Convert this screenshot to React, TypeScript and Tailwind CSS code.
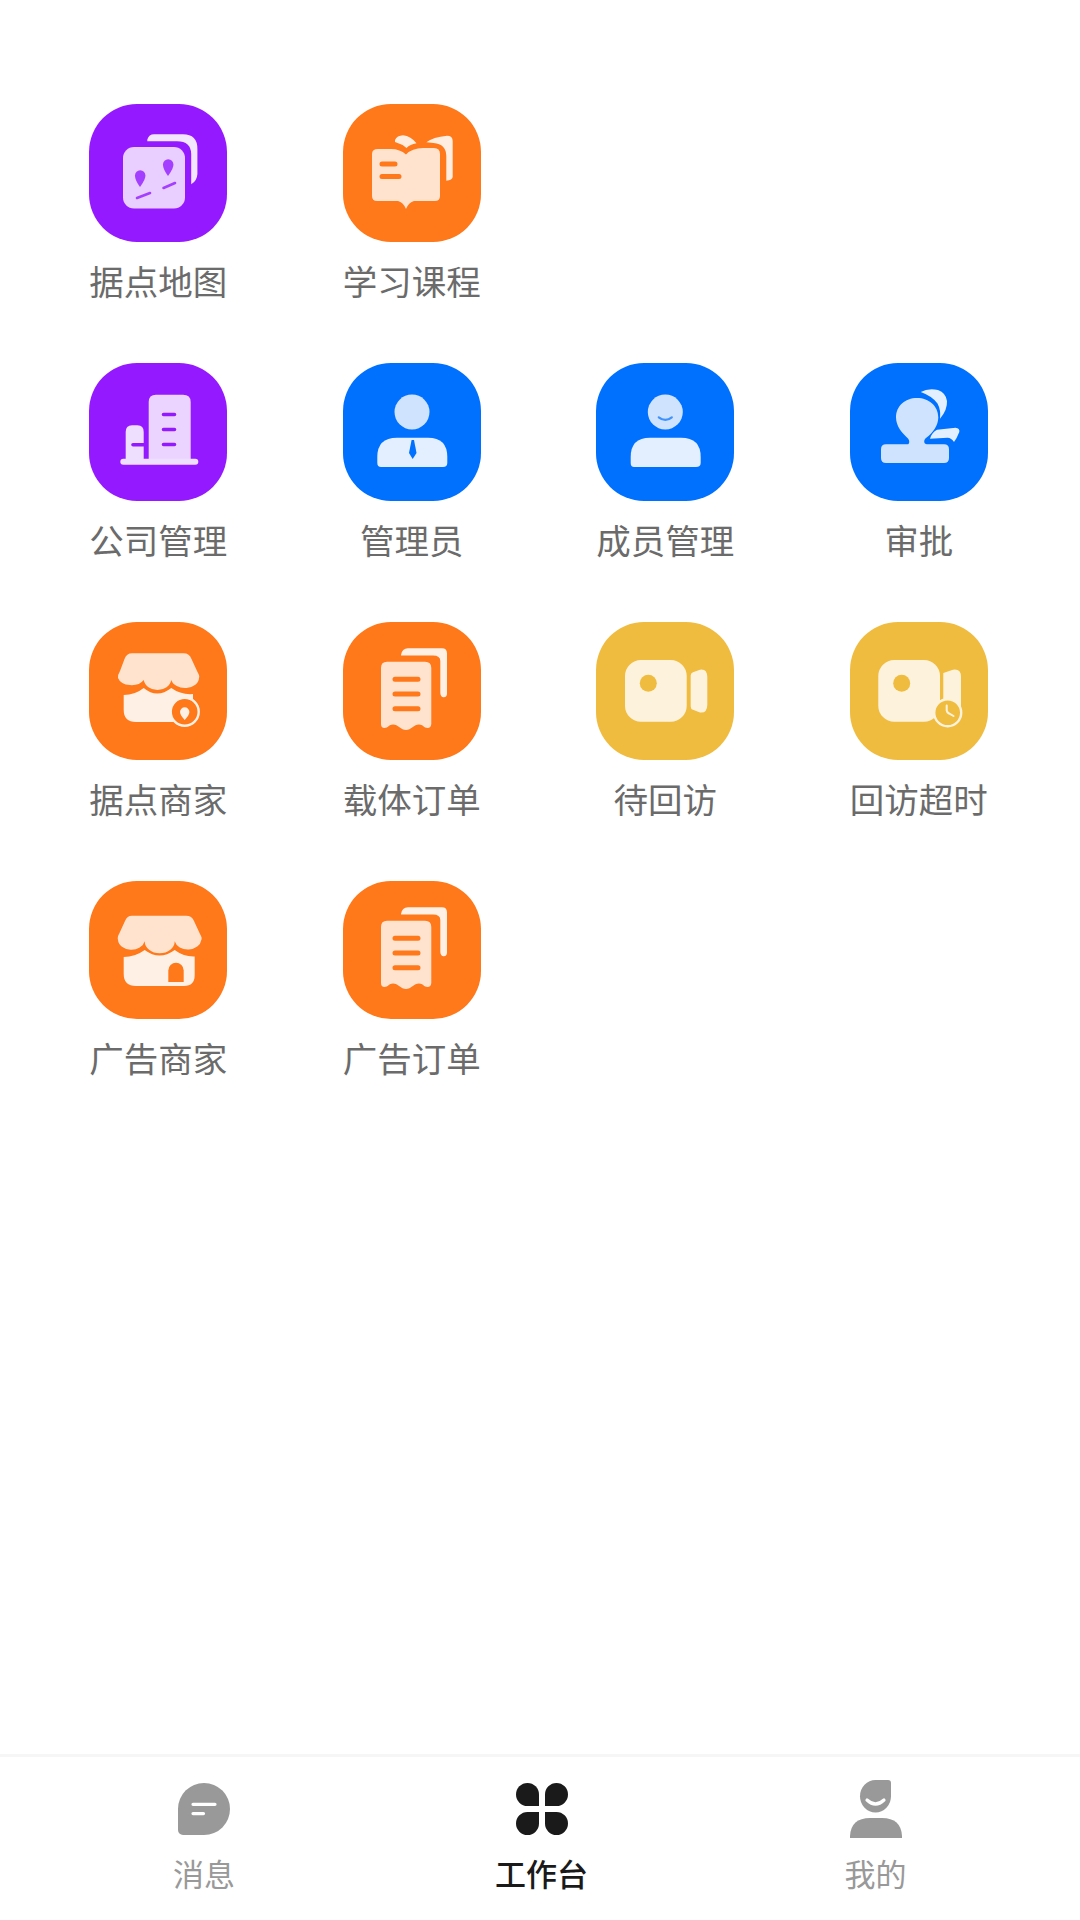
import type { ReactNode } from "react";

const PURPLE = "#9519ff";
const ORANGE = "#ff7819";
const BLUE = "#0070ff";
const YELLOW = "#f0bc40";

const Svg = ({ children }: { children: ReactNode }) => (
  <svg width="138" height="138" viewBox="0 0 138 138" className="block">
    {children}
  </svg>
);

const MapIcon = () => (
  <Svg>
    <path d="M58.3 35.5Q60 30.3 65 30.3H94Q108.4 30.3 108.4 45V70Q108 77 102.2 80.3V50Q102 37.2 88 37.2H58.3Z" fill="#f2e6ff" />
    <rect x="34" y="43" width="62" height="61.5" rx="11" fill="#e8cfff" />
    <path d="M79 72C75 66.5 74 63 74 60.5A5.2 5.2 0 0 1 84.4 60.5C84.4 63 83 66.5 79 72Z" fill="#a53fff" />
    <path d="M51 83C47 77.5 46 74 46 71.5A5.2 5.2 0 0 1 56.4 71.5C56.4 74 55 77.5 51 83Z" fill="#a53fff" />
    <path d="M48 94L61 89M74.5 84L86 79" stroke="#a53fff" strokeWidth="2.6" strokeLinecap="round" />
  </Svg>
);

const BookIcon = () => (
  <Svg>
    <path d="M52 36Q54 31.5 60 31.2Q68 32 73.5 39.3Q67 40.5 63.5 44Q59 40 52 38Z M83.3 38.3Q90 33 104 31.7Q109.7 31.7 109.7 37V73Q109.5 76 103.3 76.7V52Q103 40 90.7 39Z" fill="#ffeee0" />
    <path d="M35 45H48Q57 45 63 50.5Q69 44 80 44H91Q97 44 97 50V92Q97 97 92 97H71Q66 98 63 105Q60 98 55 97H34Q29 97 29 92V50Q29 45 35 45Z" fill="#ffe3cf" />
    <path d="M39 60H52M39 72.5H56" stroke={ORANGE} strokeWidth="5" strokeLinecap="round" />
  </Svg>
);

const BuildingIcon = () => (
  <Svg>
    <path d="M59.7 96V39Q59.7 31.7 67 31.7H94Q101.7 31.7 101.7 39V96Z" fill="#ebd4ff" />
    <path d="M36.7 96V69Q36.7 62.3 43 62.3H48.5Q54.7 62.3 54.7 69V96Z" fill="#efdfff" />
    <rect x="31.3" y="95.7" width="78" height="6" rx="3" fill="#efdfff" />
    <path d="M74.5 51.5H85.5M74.5 66.5H85.5M74.5 81.5H85.5" stroke={PURPLE} strokeWidth="3.6" strokeLinecap="round" />
    <path d="M44 81.7H54.7" stroke={PURPLE} strokeWidth="3.6" strokeLinecap="round" />
  </Svg>
);

const AdminIcon = () => (
  <Svg>
    <circle cx="69" cy="49" r="17.5" fill="#cfe3ff" />
    <path d="M34.3 100V94Q34.3 74.7 54 74.7H85Q104.3 74.7 104.3 94V100Q104.3 104 100 104H38Q34.3 104 34.3 100Z" fill="#e3efff" />
    <path d="M68.6 77H71L73.5 90L69.7 96L66 90Z" fill={BLUE} />
  </Svg>
);

const MemberIcon = () => (
  <Svg>
    <circle cx="69.3" cy="49" r="17.5" fill="#cfe3ff" />
    <path d="M62.8 54.3Q69.3 59.5 75.8 54.3" stroke={BLUE} strokeOpacity="0.7" strokeWidth="2.2" fill="none" strokeLinecap="round" />
    <path d="M34.7 100V94Q34.7 74.7 54 74.7H85Q104.7 74.7 104.7 94V100Q104.7 104 100 104H38Q34.7 104 34.7 100Z" fill="#e3efff" />
  </Svg>
);

const ApprovalIcon = () => (
  <Svg>
    <path d="M36 81.3H57.5C59.5 81.3 60 78 58 75.5C52 70 46 63 46 54.5C46 43 55 35 67 35C79 35 88.3 43 88.3 54.5C88.3 62 83 70 76 75C73.5 77 73.5 81.3 77 81.3H94Q99 81.3 99 86.3V95Q99 100 94 100H36Q31 100 31 95V86.3Q31 81.3 36 81.3Z" fill="#cfe3ff" />
    <path d="M70.7 29Q78 25 88 27Q96 30 97 38Q97.5 47 90 55.7Q91 47 87.5 40.5Q82 33 70.7 29Z" fill="#e3efff" />
    <path d="M80 75.7Q82 69 87 66.7L105.5 64.7Q110 65 109.3 69Q107 75 104 79Q101.5 75 97.5 74.8Z" fill="#e3efff" />
  </Svg>
);

const StorePinIcon = () => (
  <Svg>
    <path d="M43 31.3H94.5Q100.5 31.3 102.5 37L108.5 50Q111 54 110 56A14 10 0 0 1 82.3 58A14 12 0 0 1 54.7 58A14 10 0 0 1 29 56Q28.5 53 31 49L35.5 37Q37.5 31.3 43 31.3Z" fill="#ffe3cf" />
    <path d="M34.7 73Q46 73 54.7 66Q68 77 82.3 66Q92 73 104 72V92Q104 100 96 100H47Q34.7 100 34.7 88Z" fill="#fff0e6" />
    <circle cx="95.7" cy="89.7" r="14" fill={ORANGE} stroke="#fff0e6" strokeWidth="2.4" />
    <path d="M95.7 98C92.5 94.5 91 92 91 90A4.7 4.7 0 0 1 100.4 90C100.4 92 99 94.5 95.7 98Z" fill="#fff0e6" />
  </Svg>
);

const StoreDoorIcon = () => (
  <Svg>
    <path d="M43 34.7H97Q103 34.7 105 40L111 53Q113.5 57 112.3 59A13.5 10.5 0 0 1 85.7 60.3A15 12 0 0 1 55.7 60.3A13.5 10.5 0 0 1 29 59Q28 56 30.5 52L36 40Q38 34.7 43 34.7Z" fill="#ffe3cf" />
    <path d="M34.7 76Q46 76 55.7 69Q70.5 80 85.7 69Q95 76 105.7 75.5V94Q105.7 105 95 105H47Q34.7 105 34.7 93Z" fill="#fff0e6" />
    <path d="M79.3 101V89.5A7.7 7.7 0 0 1 94.7 89.5V101Z" fill={ORANGE} />
  </Svg>
);

const DocIcon = () => (
  <Svg>
    <path d="M58 33Q59 26.3 65 26.3H99Q104 26.3 104 31.5V72Q103.5 75.5 100.6 75.3Q97.5 75 97.3 71V39Q97.3 33.5 90 33.5H58Z" fill="#fff0e6" />
    <path d="M44 39.7H82Q88.3 39.7 88.3 46V102Q88 106 84.5 106C81 106 80 102.5 76 102.5C71 102.5 68 108 63 108C58 108 55 102.5 50 102.5C46 102.5 45 106 41.5 106Q38 106 38 102V46Q38 39.7 44 39.7Z" fill="#ffe3cf" />
    <path d="M52 57.3H75M52 72H75M52 86.7H75" stroke={ORANGE} strokeWidth="5" strokeLinecap="round" />
  </Svg>
);

const VideoIcon = () => (
  <Svg>
    <rect x="29" y="38" width="61.7" height="61.7" rx="16" fill="#fdf3dc" />
    <circle cx="52.3" cy="61.3" r="8.5" fill={YELLOW} />
    <path d="M94.7 53.5Q94.7 51 97 50.3L104 47.7Q111 46.5 111.3 55V83Q111 91.5 104 90.5L97 87.8Q94.7 87 94.7 84.5Z" fill="#fdf3dc" />
  </Svg>
);

const VideoClockIcon = () => (
  <Svg>
    <rect x="28.3" y="38" width="61.7" height="61.7" rx="16" fill="#fdf3dc" />
    <circle cx="51.7" cy="61.3" r="8.5" fill={YELLOW} />
    <path d="M93.3 51L103 47.7Q111 46.5 111 55V88H93.3Z" fill="#fdf3dc" />
    <circle cx="97.7" cy="90.7" r="13.5" fill={YELLOW} stroke="#fdf3dc" strokeWidth="2.4" />
    <path d="M96.7 83.5V88.5Q97 90.5 99 91.5L103.5 94" stroke="#fdf3dc" strokeWidth="2" fill="none" strokeLinecap="round" />
  </Svg>
);

type Item = { label: string; bg: string; icon: ReactNode };

const items: (Item | null)[] = [
  { label: "据点地图", bg: "bg-[#9519ff]", icon: <MapIcon /> },
  { label: "学习课程", bg: "bg-[#ff7819]", icon: <BookIcon /> },
  null,
  null,
  { label: "公司管理", bg: "bg-[#9519ff]", icon: <BuildingIcon /> },
  { label: "管理员", bg: "bg-[#0070ff]", icon: <AdminIcon /> },
  { label: "成员管理", bg: "bg-[#0070ff]", icon: <MemberIcon /> },
  { label: "审批", bg: "bg-[#0070ff]", icon: <ApprovalIcon /> },
  { label: "据点商家", bg: "bg-[#ff7819]", icon: <StorePinIcon /> },
  { label: "载体订单", bg: "bg-[#ff7819]", icon: <DocIcon /> },
  { label: "待回访", bg: "bg-[#f0bc40]", icon: <VideoIcon /> },
  { label: "回访超时", bg: "bg-[#f0bc40]", icon: <VideoClockIcon /> },
  { label: "广告商家", bg: "bg-[#ff7819]", icon: <StoreDoorIcon /> },
  { label: "广告订单", bg: "bg-[#ff7819]", icon: <DocIcon /> },
];

const Tile = ({ item }: { item: Item }) => (
  <div className="flex flex-col items-center">
    <div className={`h-[138px] w-[138px] overflow-hidden rounded-[48px] ${item.bg}`}>{item.icon}</div>
    <div className="mt-[13px] whitespace-nowrap text-[34.5px] leading-[50px] text-[#6b6b6b]">{item.label}</div>
  </div>
);

const MessageTab = () => (
  <svg width="52" height="52" viewBox="0 0 52 52">
    <path d="M26 0A26 26 0 1 1 26 52H5A5 5 0 0 1 0 47V26A26 26 0 0 1 26 0Z" fill="#999999" />
    <path d="M15 21.3H37M15 30.6H25.5" stroke="#ffffff" strokeWidth="3.2" strokeLinecap="round" />
  </svg>
);

const WorkTab = () => (
  <svg width="52" height="52" viewBox="0 0 52 52">
    <path d="M11.5 0A11.5 11.5 0 0 1 23 11.5V23H11.5A11.5 11.5 0 0 1 11.5 0Z" fill="#1a1a1a" />
    <path d="M40.5 0A11.5 11.5 0 0 0 29 11.5V23H40.5A11.5 11.5 0 0 0 40.5 0Z" fill="#1a1a1a" />
    <path d="M11.5 52A11.5 11.5 0 0 0 23 40.5V29H11.5A11.5 11.5 0 0 0 11.5 52Z" fill="#1a1a1a" />
    <path d="M40.5 52A11.5 11.5 0 0 1 29 40.5V29H40.5A11.5 11.5 0 0 1 40.5 52Z" fill="#1a1a1a" />
  </svg>
);

const MeTab = () => (
  <svg width="52" height="58" viewBox="0 0 52 58">
    <path d="M25.5 0H38Q41 0 41 3V16.2A15.5 16.2 0 1 1 25.5 0Z" fill="#999999" />
    <path d="M17 20Q25.5 28 34 20" stroke="#ffffff" strokeWidth="3.2" fill="none" strokeLinecap="round" />
    <path d="M0 56Q1 38 20 38H32Q51 38 52 56V58H0Z" fill="#999999" />
  </svg>
);

const Tab = ({ label, active, icon }: { label: string; active?: boolean; icon: ReactNode }) => (
  <div className="flex flex-col items-center">
    <div className="flex h-[60px] items-center justify-center">{icon}</div>
    <div className={`mt-[12px] text-[31px] leading-[44px] ${active ? "font-medium text-[#1a1a1a]" : "text-[#999999]"}`}>
      {label}
    </div>
  </div>
);

export default function App() {
  return (
    <div className="flex h-[1920px] w-[1080px] flex-col bg-white font-['Noto_Sans_CJK_SC','Noto_Sans',sans-serif]">
      <main className="flex-1 pl-[31.5px] pt-[103.5px]">
        <div className="grid grid-cols-[repeat(4,253.5px)] gap-y-[58.3px]">
          {items.map((item, i) => (item ? <Tile key={i} item={item} /> : <div key={i} />))}
        </div>
      </main>
      <nav className="grid h-[166px] grid-cols-[338px_337px_331px] border-t-[3px] border-[#f6f6f6] pl-[35px] pt-[22px]">
        <Tab label="消息" icon={<MessageTab />} />
        <Tab label="工作台" active icon={<WorkTab />} />
        <Tab label="我的" icon={<MeTab />} />
      </nav>
    </div>
  );
}
